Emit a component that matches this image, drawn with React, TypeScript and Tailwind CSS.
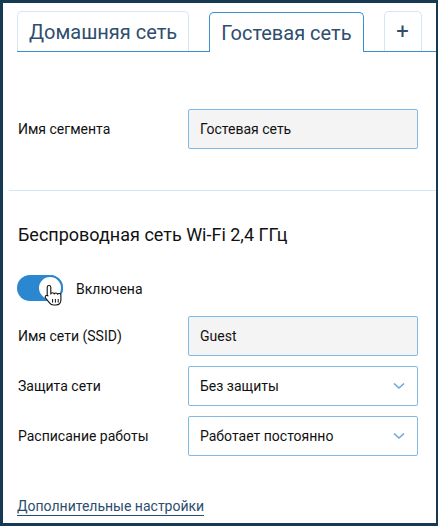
import React from "react";

const font = { fontFamily: "Roboto, 'Noto Sans', sans-serif" };

function Chevron() {
  return (
    <svg width="12" height="8" viewBox="0 0 12 8" className="shrink-0">
      <path d="M1 1.5 L6 6 L11 1.5" fill="none" stroke="#6fa8dc" strokeWidth="1.6" />
    </svg>
  );
}

function HandCursor() {
  return (
    <svg
      width="20"
      height="22"
      viewBox="0 0 20 22"
      className="absolute left-[27px] top-[9px]"
    >
      <path
        d="M5 1.5c1 0 1.8.8 1.8 1.8V10c.3-.9 1-1.3 1.8-1.3.9 0 1.5.6 1.7 1.3.3-.6.9-1 1.6-1 .9 0 1.5.6 1.7 1.3.3-.5.8-.8 1.5-.8 1 0 1.8.8 1.8 1.8v4.5c0 3-2 5.2-5 5.2H9.5c-1.8 0-3-.8-4-2.1L1.6 14c-.6-.8-.4-1.9.4-2.4.7-.4 1.5-.3 2 .3l-.8-.9V3.3C3.2 2.3 4 1.5 5 1.5z"
        fill="#fff"
        stroke="#111"
        strokeWidth="1.1"
        strokeLinejoin="round"
      />
      <path d="M8.6 15v3.6M11.4 15v3.6M14.2 15v3.6" stroke="#111" strokeWidth="1" />
    </svg>
  );
}

function Row({ label, children }: { label: string; children: React.ReactNode }) {
  return (
    <div className="flex items-center h-[40px]">
      <div className="w-[185px] pl-[15px] text-[14px] text-[#111]">{label}</div>
      {children}
    </div>
  );
}

function Field({ value }: { value: string }) {
  return (
    <div className="w-[230px] h-[40px] flex items-center pl-[11px] border border-[#80bbe6] rounded-[2px] bg-[#f4f4f4] text-[14px] text-[#111]">
      {value}
    </div>
  );
}

function Select({ value }: { value: string }) {
  return (
    <div className="w-[230px] h-[40px] flex items-center justify-between pl-[11px] pr-[12px] border border-[#80bbe6] rounded-[2px] bg-white text-[14px] text-[#111]">
      <span>{value}</span>
      <Chevron />
    </div>
  );
}

export default function App() {
  return (
    <div
      style={font}
      className="w-[438px] h-[526px] bg-white border-[3px] border-r-2 border-[#163a52] overflow-hidden"
    >
      {/* вкладки */}
      <div className="ml-[14px] mt-[8px] flex items-end gap-5 border-b border-[#3b8fd1] h-[41px]">
        <div className="h-[40px] px-[11px] flex items-center border border-b-0 border-[#d5e7f5] rounded-t-[5px] text-[20px] text-[#2e4e6e]">
          Домашняя сеть
        </div>
        <div className="relative z-10 -mb-px h-[40px] px-[11px] flex items-center border border-b-0 border-[#3b8fd1] rounded-t-[5px] bg-white text-[20px] text-[#2e4e6e]">
          Гостевая сеть
        </div>
        <div className="h-[40px] w-[38px] flex items-center justify-center border border-b-0 border-[#d5e7f5] rounded-t-[5px] text-[22px] text-[#2e4e6e]">
          +
        </div>
      </div>

      <div className="mt-[57px]">
        <Row label="Имя сегмента">
          <Field value="Гостевая сеть" />
        </Row>
      </div>

      <div className="ml-[6px] mt-[41px] h-px bg-[#d3e8f6]" />

      <div className="mt-[32px] pl-[15px] text-[18px] leading-[24px] text-[#111]">
        Беспроводная сеть Wi-Fi 2,4 ГГц
      </div>

      <div className="mt-[28px] pl-[14px] flex items-center gap-[13px]">
        <div className="relative w-[46px] h-[26px] rounded-full bg-[#2b87cf]">
          <div className="absolute right-0 top-0 w-[26px] h-[26px] rounded-full bg-white border-2 border-[#2b87cf]" />
          <HandCursor />
        </div>
        <span className="pt-[3px] text-[14px] text-[#111]">Включена</span>
      </div>

      <div className="mt-[15px] flex flex-col gap-[10px]">
        <Row label="Имя сети (SSID)">
          <Field value="Guest" />
        </Row>
        <Row label="Защита сети">
          <Select value="Без защиты" />
        </Row>
        <Row label="Расписание работы">
          <Select value="Работает постоянно" />
        </Row>
      </div>

      <div className="mt-[38px] pl-[14px]">
        <span className="inline-block leading-[17px] text-[14px] text-[#2b4d6f] border-b border-[#2b4d6f]">
          Дополнительные настройки
        </span>
      </div>
    </div>
  );
}
